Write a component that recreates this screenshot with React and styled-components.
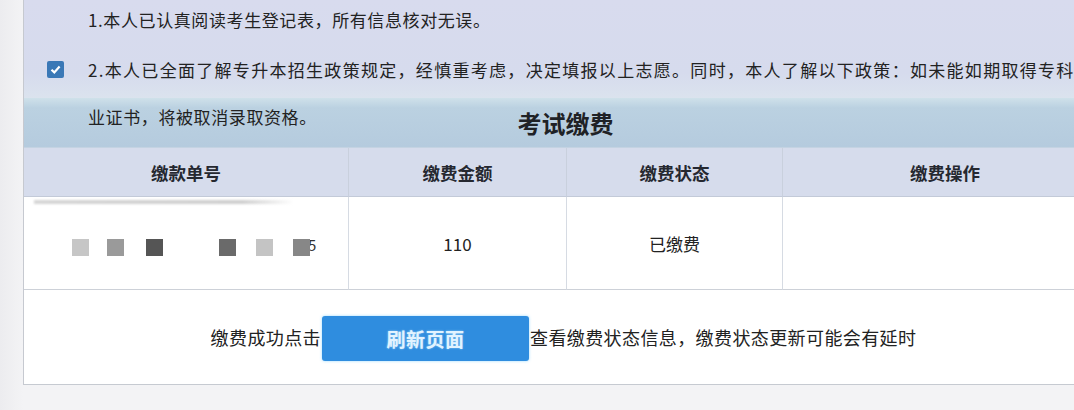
import React from 'react';
import styled, { createGlobalStyle } from 'styled-components';

const GlobalStyle = createGlobalStyle`
  * { box-sizing: border-box; }
  body {
    margin: 0;
    overflow: hidden;
    background: #f2f2f4;
    font-family: "Noto Sans CJK SC", "Noto Sans", sans-serif;
    color: #222;
  }
`;

const Page = styled.div`
  width: 1074px;
  height: 410px;
  overflow: hidden;
  padding-left: 23px;
  background: linear-gradient(90deg, #ececef 0px, #f3f3f5 23px);
`;

const Panel = styled.div`
  width: 1084px;
  border-left: 1px solid #c6c9d0;
  display: flex;
  flex-direction: column;
`;

const Notice = styled.div`
  background: linear-gradient(180deg, #d8dbee 0%, #d6dbed 75%, #dbe3ee 100%);
  font-size: 17px;
  white-space: nowrap;
  letter-spacing: 0.6px;
`;

const NoticeLine = styled.div`
  height: 40px;
  line-height: 40px;
  padding-left: 64px;
`;

const CheckLine = styled.div`
  height: 58px;
  display: flex;
  align-items: center;
  gap: 24px;
  padding-left: 23px;
  letter-spacing: 1.3px;
`;

const CheckBox = styled.span`
  width: 17px;
  height: 17px;
  border-radius: 2px;
  background: #3a78b6;
  display: flex;
  align-items: center;
  justify-content: center;
  flex: none;
`;

const Band = styled.div`
  height: 50px;
  display: grid;
  background: linear-gradient(180deg, #cfe1ea 0%, #bbd1e1 20%, #b5cbde 100%);
  border-bottom: 1px solid #c4d3e2;
`;

const BandText = styled.div`
  grid-area: 1 / 1;
  justify-self: start;
  padding: 8px 0 0 64px;
  font-size: 17px;
  letter-spacing: 0.6px;
  line-height: 22px;
`;

const BandTitle = styled.div`
  grid-area: 1 / 1;
  justify-self: center;
  padding-top: 11px;
  font-size: 24px;
  font-weight: 700;
  line-height: 28px;
  color: #1f2226;
`;

const Table = styled.div`
  display: grid;
  grid-template-columns: 324px 218px 216px 1fr;
`;

const HeadCell = styled.div`
  height: 49px;
  display: flex;
  align-items: center;
  justify-content: center;
  background: #d6dcec;
  border-bottom: 1px solid #c3cad8;
  border-left: ${(p) => (p.$first ? 'none' : '1px solid #c9d0dd')};
  font-size: 17.5px;
  font-weight: 700;
  color: #252830;
`;

const BodyCell = styled.div`
  height: 93px;
  display: flex;
  align-items: center;
  justify-content: ${(p) => (p.$start ? 'flex-start' : 'center')};
  background: #fff;
  border-bottom: 1px solid #cdd1d8;
  border-left: ${(p) => (p.$first ? 'none' : '1px solid #d6dbe3')};
  font-size: 17px;
  color: #222;
  position: relative;
`;

const Smear = styled.div`
  position: absolute;
  top: 3px;
  left: 10px;
  width: 260px;
  height: 4px;
  background: linear-gradient(90deg, #d6d6d6, #cfcfcf 80%, rgba(210, 210, 210, 0));
  filter: blur(1px);
`;

const Mask = styled.div`
  display: flex;
  align-items: center;
  padding-left: 48px;
  padding-top: 8px;
`;

const Square = styled.span`
  width: 17px;
  height: 17px;
  background: ${(p) => p.$color};
  margin-left: ${(p) => p.$gap}px;
  filter: blur(0.4px);
  flex: none;
`;

const Tail = styled.span`
  margin-left: -2px;
  margin-top: -6px;
  font-size: 15px;
  color: #333;
`;

const Footer = styled.div`
  height: 95px;
  display: flex;
  align-items: center;
  justify-content: center;
  padding-right: 4px;
  background: #fff;
  border-bottom: 1px solid #c6cad1;
  font-size: 18px;
  color: #222;
  white-space: nowrap;
  letter-spacing: 0.4px;
`;

const RefreshButton = styled.button`
  width: 207px;
  height: 45px;
  margin: 2px 1px 0;
  border: none;
  border-radius: 3px;
  background: #2f8ddf;
  box-shadow: 0 0 3px rgba(130, 210, 255, 0.8);
  color: #e2f3ff;
  font-family: "Noto Sans CJK SC", sans-serif;
  font-size: 19px;
  font-weight: 700;
  letter-spacing: 0.5px;
  text-shadow: 0 0 2px rgba(200, 240, 255, 0.7);
`;

const squares = [
  { color: '#c6c6c6', gap: 0 },
  { color: '#9a9a9a', gap: 18 },
  { color: '#555555', gap: 22 },
  { color: '#6a6a6a', gap: 56 },
  { color: '#c4c4c4', gap: 20 },
  { color: '#878787', gap: 20 },
];

export default function App() {
  return (
    <>
      <GlobalStyle />
      <Page>
        <Panel>
          <Notice>
            <NoticeLine>1.本人已认真阅读考生登记表，所有信息核对无误。</NoticeLine>
            <CheckLine>
              <CheckBox>
                <svg width="13" height="13" viewBox="0 0 13 13">
                  <path d="M2.5 6.8 L5.3 9.4 L10.6 3.4" fill="none" stroke="#fff" strokeWidth="2.2" />
                </svg>
              </CheckBox>
              <span>2.本人已全面了解专升本招生政策规定，经慎重考虑，决定填报以上志愿。同时，本人了解以下政策：如未能如期取得专科</span>
            </CheckLine>
          </Notice>
          <Band>
            <BandText>业证书，将被取消录取资格。</BandText>
            <BandTitle>考试缴费</BandTitle>
          </Band>
          <Table>
            <HeadCell $first>缴款单号</HeadCell>
            <HeadCell>缴费金额</HeadCell>
            <HeadCell>缴费状态</HeadCell>
            <HeadCell>缴费操作</HeadCell>
            <BodyCell $first $start>
              <Smear />
              <Mask>
                {squares.map((s, i) => (
                  <Square key={i} $color={s.color} $gap={s.gap} />
                ))}
                <Tail>5</Tail>
              </Mask>
            </BodyCell>
            <BodyCell>110</BodyCell>
            <BodyCell>已缴费</BodyCell>
            <BodyCell />
          </Table>
          <Footer>
            缴费成功点击
            <RefreshButton>刷新页面</RefreshButton>
            查看缴费状态信息，缴费状态更新可能会有延时
          </Footer>
        </Panel>
      </Page>
    </>
  );
}
